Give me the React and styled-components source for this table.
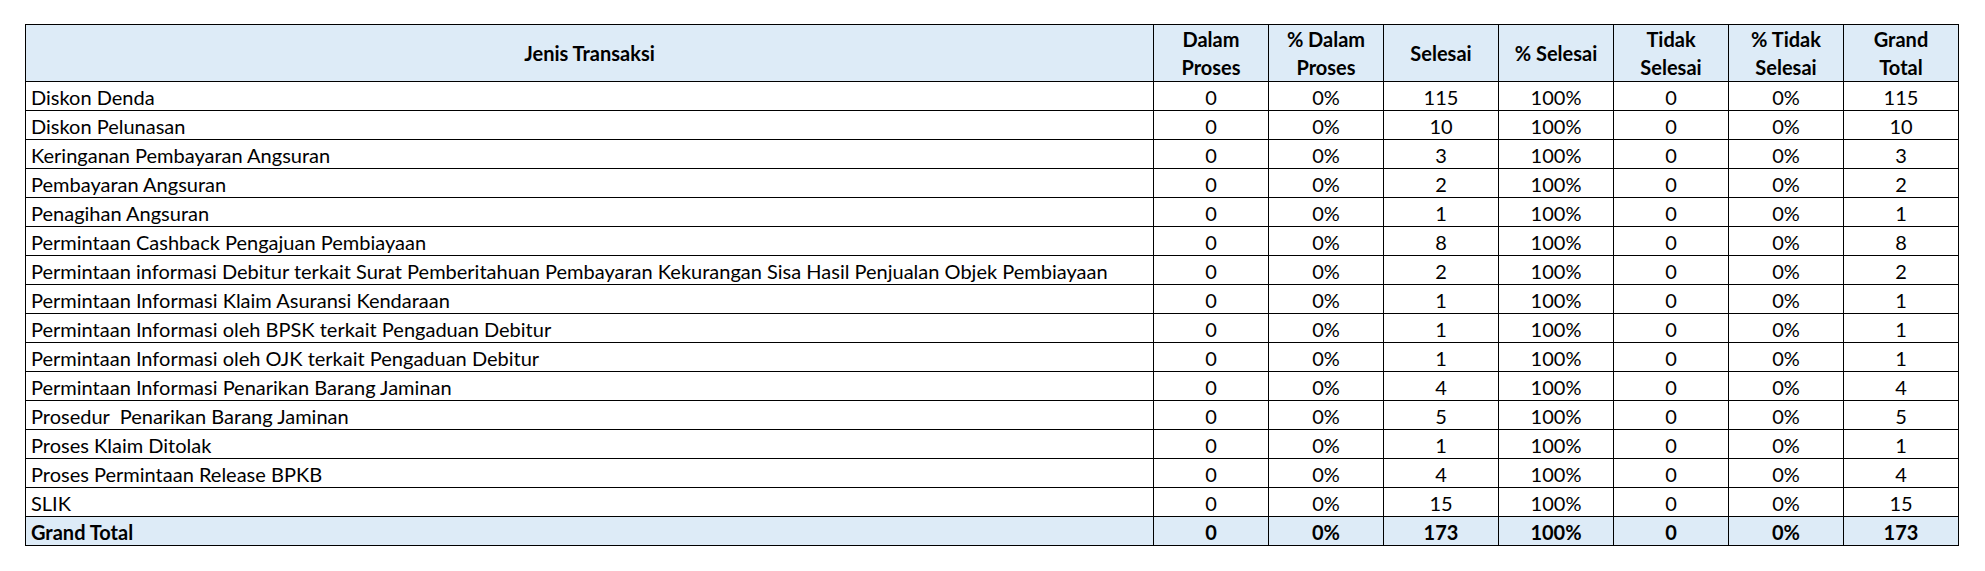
import React from 'react';
import styled, { createGlobalStyle } from 'styled-components';

const GlobalStyle = createGlobalStyle`
    body {
        margin: 0;
        background: #ffffff;
        font-family: Lato, "Open Sans", sans-serif;
        color: #000000;
    }
`

const Page = styled.div`
    padding: 24px 0 0 25px;
`

const Sheet = styled.table`
    border-collapse: collapse;
    table-layout: fixed;
    width: 1934px;
    font-size: 20px;
`

const HeadCell = styled.th`
    background-color: #ddebf7;
    border: 1px solid #000;
    height: 56px;
    padding: 0;
    font-weight: 700;
    line-height: 28px;
    text-align: center;
    vertical-align: middle;
`

const Row = styled.tr`
    background-color: ${props => props.isTotal ? '#ddebf7' : '#ffffff'};
    font-weight: ${props => props.isTotal ? 700 : 400};
`

const NameCell = styled.td`
    border: 1px solid #000;
    height: 26px;
    padding: 2px 0 0 5px;
    white-space: nowrap;
    overflow: hidden;
    line-height: 26px;
    vertical-align: middle;
`

const NumCell = styled.td`
    border: 1px solid #000;
    height: 26px;
    padding: 2px 0 0 0;
    text-align: center;
    line-height: 26px;
    vertical-align: middle;
`

const headers = [
    ['Dalam', 'Proses'],
    ['% Dalam', 'Proses'],
    ['Selesai'],
    ['% Selesai'],
    ['Tidak', 'Selesai'],
    ['% Tidak', 'Selesai'],
    ['Grand', 'Total'],
]

const rows = [
    ['Diskon Denda', 115],
    ['Diskon Pelunasan', 10],
    ['Keringanan Pembayaran Angsuran', 3],
    ['Pembayaran Angsuran', 2],
    ['Penagihan Angsuran', 1],
    ['Permintaan Cashback Pengajuan Pembiayaan', 8],
    ['Permintaan informasi Debitur terkait Surat Pemberitahuan Pembayaran Kekurangan Sisa Hasil Penjualan Objek Pembiayaan', 2],
    ['Permintaan Informasi Klaim Asuransi Kendaraan', 1],
    ['Permintaan Informasi oleh BPSK terkait Pengaduan Debitur', 1],
    ['Permintaan Informasi oleh OJK terkait Pengaduan Debitur', 1],
    ['Permintaan Informasi Penarikan Barang Jaminan', 4],
    ['Prosedur\u00a0 Penarikan Barang Jaminan', 5],
    ['Proses Klaim Ditolak', 1],
    ['Proses Permintaan Release BPKB', 4],
    ['SLIK', 15],
]

const total = rows.reduce((sum, r) => sum + r[1], 0);

const DataRow = ({ name, done, isTotal }) => (
    <Row isTotal={isTotal}>
        <NameCell>{name}</NameCell>
        <NumCell>0</NumCell>
        <NumCell>0%</NumCell>
        <NumCell>{done}</NumCell>
        <NumCell>100%</NumCell>
        <NumCell>0</NumCell>
        <NumCell>0%</NumCell>
        <NumCell>{done}</NumCell>
    </Row>
)

const App = () => (
    <>
        <GlobalStyle />
        <Page>
            <Sheet>
                <colgroup>
                    <col style={{ width: 1128 }} />
                    {headers.map((_, i) => <col key={i} style={{ width: 115 }} />)}
                </colgroup>
                <thead>
                    <tr>
                        <HeadCell>Jenis Transaksi</HeadCell>
                        {headers.map((lines, i) => (
                            <HeadCell key={i}>
                                {lines.map((l, j) => <div key={j}>{l}</div>)}
                            </HeadCell>
                        ))}
                    </tr>
                </thead>
                <tbody>
                    {rows.map(([name, done]) => <DataRow key={name} name={name} done={done} />)}
                    <DataRow name="Grand Total" done={total} isTotal />
                </tbody>
            </Sheet>
        </Page>
    </>
)

export default App
